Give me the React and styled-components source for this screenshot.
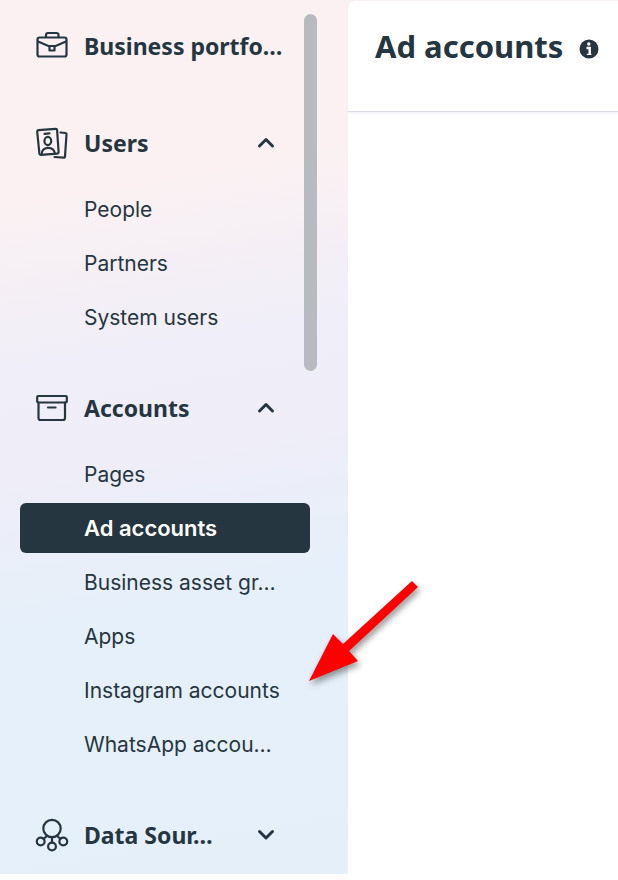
import React, { useState } from "react";
import styled, { createGlobalStyle } from "styled-components";

const sections = [
  {
    title: "Users",
    icon: UsersIcon,
    items: ["People", "Partners", "System users"],
  },
  {
    title: "Accounts",
    icon: ArchiveIcon,
    items: [
      "Pages",
      "Ad accounts",
      "Business asset gr…",
      "Apps",
      "Instagram accounts",
      "WhatsApp accou…",
    ],
  },
  { title: "Data Sour…", icon: SourcesIcon, items: [] },
];

export default function App() {
  const [active, setActive] = useState("Ad accounts");
  const [open, setOpen] = useState({ Users: true, Accounts: true });

  return (
    <Page>
      <GlobalStyle />
      <Sidebar>
        <PortfolioLink href="#portfolio">
          <BriefcaseIcon />
          <Label>Business portfo…</Label>
        </PortfolioLink>
        {sections.map(({ title, icon: Icon, items }) => (
          <section key={title}>
            <SectionButton
              type="button"
              aria-expanded={!!open[title]}
              onClick={() => setOpen({ ...open, [title]: !open[title] })}
            >
              <Icon />
              <Label>{title}</Label>
              <Chevron up={!!open[title]} />
            </SectionButton>
            {open[title] && items.length > 0 && (
              <ItemList>
                {items.map((item) => (
                  <li key={item}>
                    <ItemLink
                      href="#accounts"
                      $active={item === active}
                      onClick={() => setActive(item)}
                    >
                      {item}
                    </ItemLink>
                  </li>
                ))}
              </ItemList>
            )}
          </section>
        ))}
        <ScrollThumb />
      </Sidebar>
      <Main>
        <Header>
          <h1>Ad accounts</h1>
          <InfoButton type="button" aria-label="About ad accounts">
            <InfoIcon />
          </InfoButton>
        </Header>
      </Main>
      <Arrow width="124" height="118" viewBox="0 0 124 118" aria-hidden="true">
        <path d="M9 108 L33 61 L43 71 L112 8 L118 14 L49 78 L58 88 Z" fill="#fe0000" />
      </Arrow>
    </Page>
  );
}

function BriefcaseIcon() {
  return (
    <Icon viewBox="0 0 32 32">
      <rect x="1.5" y="7.500" width="29" height="19" rx="2" />
      <path d="M10 7V5a2 2 0 0 1 2-2h8.500a2 2 0 0 1 2 2v2" />
      <path d="M2 11.500L12.500 16H19.500L30 11.500" />
      <path d="M13.500 16h5v4.500h-5z" />
    </Icon>
  );
}

function UsersIcon() {
  return (
    <Icon viewBox="0 0 32 32">
      <path d="M2.500 3.200L19.500 1.800a1.500 1.500 0 0 1 1.600 1.400L22.600 25a1.500 1.500 0 0 1-1.400 1.600L5 27.900a1.500 1.500 0 0 1-1.600-1.400L1.200 4.800a1.500 1.500 0 0 1 1.300-1.600z" />
      <path d="M8.500 6.800l5-.4" />
      <ellipse cx="11.800" cy="14" rx="3.400" ry="4.100" />
      <path d="M5.700 27.500c-.3-4 2.300-6.500 6-6.700 3.900-.2 6.600 1.700 7.300 5.700" />
      <path d="M24.500 5.500l5 .5a1.200 1.200 0 0 1 1 1.300L29 29.500a1.200 1.200 0 0 1-1.300 1.100L18.500 30" />
    </Icon>
  );
}

function ArchiveIcon() {
  return (
    <Icon viewBox="0 0 32 32">
      <rect x="1.200" y="4" width="29.600" height="6.500" rx="1" />
      <path d="M2.500 10.500V26a2 2 0 0 0 2 2h22.500a2 2 0 0 0 2-2V10.500" />
      <path d="M12 15.500h7.500" />
    </Icon>
  );
}

function SourcesIcon() {
  return (
    <Icon viewBox="0 0 32 32">
      <circle cx="16" cy="9.500" r="8.700" />
      <circle cx="4.700" cy="22.500" r="3.900" />
      <circle cx="27.300" cy="22.500" r="3.900" />
      <circle cx="16" cy="27.500" r="3.900" />
      <path d="M16 18.500v5M11 17l-3.500 2.800M21 17l3.500 2.800" />
    </Icon>
  );
}

function InfoIcon() {
  return (
    <svg width="20" height="20" viewBox="0 0 20 20" aria-hidden="true">
      <circle cx="10" cy="10" r="9.500" fill="#263640" />
      <circle cx="9.800" cy="5" r="1.700" fill="#fff" />
      <path d="M7.500 9h3.200v7" stroke="#fff" strokeWidth="2.400" fill="none" />
      <path d="M7.800 15.400h4.600" stroke="#fff" strokeWidth="1.200" />
    </svg>
  );
}

function Chevron({ up }) {
  return (
    <ChevronSvg viewBox="0 0 18 18" aria-hidden="true">
      <path d={up ? "M2.500 12L9 5.500L15.500 12" : "M2.500 5.500L9 12L15.500 5.500"} />
    </ChevronSvg>
  );
}

const GlobalStyle = createGlobalStyle`
  * {
    box-sizing: border-box;
  }
  body {
    margin: 0;
    background: #fff;
    color: #263640;
    font-family: Inter, "Liberation Sans", sans-serif;
  }
`;

const Page = styled.div`
  position: relative;
  display: flex;
  background: linear-gradient(
    170deg,
    #fbf1f2 0%,
    #fbf1f2 20%,
    #f0eef8 38%,
    #efedf8 48%,
    #e5f0fa 66%,
    #e5effa 100%
  );
`;

const Sidebar = styled.nav`
  position: relative;
  flex: 0 0 348px;
  display: flex;
  flex-direction: column;
  gap: 41px;
  padding: 15px 38px 14px 20px;
`;

const PortfolioLink = styled.a`
  display: flex;
  align-items: center;
  gap: 16px;
  height: 62px;
  padding-left: 16px;
  color: inherit;
  font: 700 23px "Noto Sans", sans-serif;
  text-decoration: none;
  white-space: nowrap;
`;

const SectionButton = styled.button`
  display: flex;
  align-items: center;
  gap: 16px;
  width: 100%;
  height: 50px;
  padding: 0 35px 0 16px;
  border: 0;
  background: none;
  color: inherit;
  font: 700 23px "Noto Sans", sans-serif;
  text-align: left;
  cursor: pointer;
`;

const Label = styled.span`
  flex: 1;
  padding-bottom: 1px;
`;

const ItemList = styled.ul`
  display: flex;
  flex-direction: column;
  gap: 4px;
  margin: 16px 0 0;
  padding: 0;
  list-style: none;
`;

const ItemLink = styled.a`
  display: flex;
  align-items: center;
  height: 50px;
  padding-left: 64px;
  border-radius: 6px;
  background: ${(props) => (props.$active ? "#263640" : "none")};
  color: ${(props) => (props.$active ? "#fff" : "inherit")};
  font-size: ${(props) => (props.$active ? "22px" : "21px")};
  font-weight: ${(props) => (props.$active ? 600 : 400)};
  text-decoration: none;
  white-space: nowrap;
`;

const ScrollThumb = styled.div`
  position: absolute;
  top: 14px;
  right: 31px;
  width: 13px;
  height: 357px;
  border-radius: 7px;
  background: #b7babf;
`;

const Main = styled.main`
  flex: 1;
  min-width: 0;
  margin-top: 1px;
  border-top-left-radius: 8px;
  background: #fff;
`;

const Header = styled.header`
  display: flex;
  align-items: center;
  gap: 16px;
  height: 111px;
  padding: 0 20px 20px 27px;
  border-bottom: 1px solid #d9dae5;
  box-shadow: 0 1px 3px #eeeef4;
  h1 {
    margin: 0;
    font: 700 31px "Noto Sans", sans-serif;
    white-space: nowrap;
  }
`;

const InfoButton = styled.button`
  display: flex;
  padding: 5px 0 0;
  border: 0;
  background: none;
`;

const Icon = styled.svg.attrs({ "aria-hidden": true })`
  flex: none;
  width: 32px;
  height: 32px;
  overflow: visible;
  fill: none;
  stroke: #263640;
  stroke-width: 2.2;
  stroke-linecap: round;
  stroke-linejoin: round;
`;

const ChevronSvg = styled.svg`
  flex: none;
  width: 18px;
  height: 18px;
  fill: none;
  stroke: #263640;
  stroke-width: 3;
  stroke-linecap: round;
  stroke-linejoin: round;
`;

const Arrow = styled.svg`
  position: absolute;
  top: 573px;
  left: 300px;
  overflow: visible;
  pointer-events: none;
  filter: drop-shadow(2px 4px 3px rgba(0, 0, 0, 0.4));
`;
